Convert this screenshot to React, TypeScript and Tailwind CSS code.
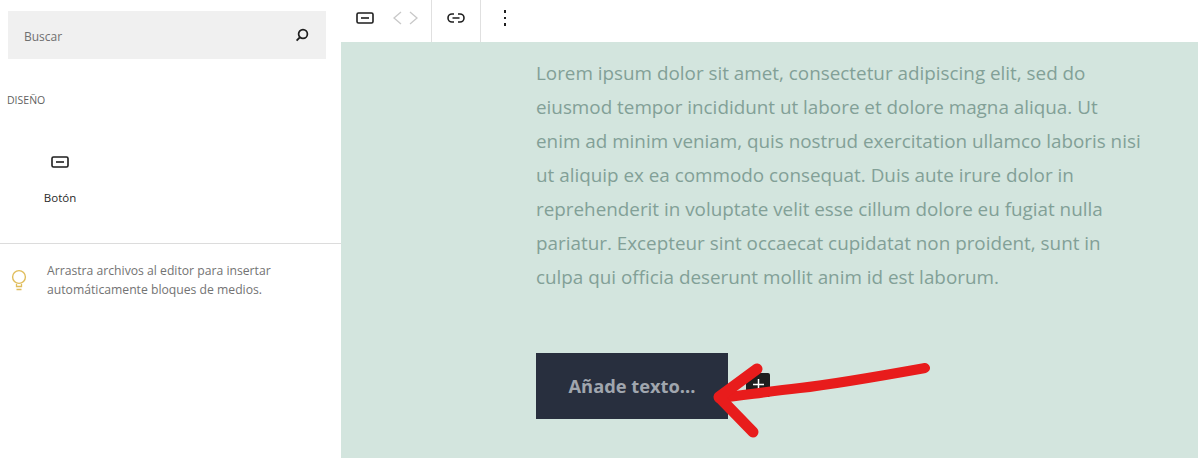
import { Fragment } from "react";

const font = "font-['Open_Sans',sans-serif]";

const lines = [
  "Lorem ipsum dolor sit amet, consectetur adipiscing elit, sed do",
  "eiusmod tempor incididunt ut labore et dolore magna aliqua. Ut",
  "enim ad minim veniam, quis nostrud exercitation ullamco laboris nisi",
  "ut aliquip ex ea commodo consequat. Duis aute irure dolor in",
  "reprehenderit in voluptate velit esse cillum dolore eu fugiat nulla",
  "pariatur. Excepteur sint occaecat cupidatat non proident, sunt in",
  "culpa qui officia deserunt mollit anim id est laborum.",
];

const ButtonIcon = () => (
  <svg width="18" height="12" viewBox="0 0 18 12" fill="none">
    <rect x="1" y="1" width="16" height="10" rx="1.5" stroke="#1e1e1e" strokeWidth="1.6" />
    <path d="M5 6h8" stroke="#1e1e1e" strokeWidth="1.6" />
  </svg>
);

const Sidebar = () => (
  <aside className="w-[341px] h-full shrink-0 bg-white flex flex-col">
    <div className="pl-2 pr-[15px] pt-[11px]">
      <div className="h-[48px] bg-[#f0f0f0] flex items-center justify-between pl-4 pr-4">
        <span className="text-[12px] leading-[16px] mt-[3px] text-[#6f6f6f]">Buscar</span>
        <svg width="16" height="16" viewBox="0 0 16 16" fill="none" className="mb-[1px]">
          <circle cx="9" cy="7" r="4.4" stroke="#1e1e1e" strokeWidth="1.7" />
          <path d="M5.8 10.4 2.6 13.6" stroke="#1e1e1e" strokeWidth="1.9" />
        </svg>
      </div>
    </div>
    <div className="pl-[7px] mt-[33px] text-[10.5px] leading-[16px] text-[#5f5f5f]">DISEÑO</div>
    <div className="w-[104px] ml-[8px] mt-[48px] flex flex-col items-center">
      <ButtonIcon />
      <span className="mt-[22px] text-[11.5px] leading-[16px] text-[#2a2a2a]">Botón</span>
    </div>
    <div className="mt-[37px] border-t border-[#dcdcdc] flex pt-[17px] pl-[11px]">
      <svg width="16" height="28" viewBox="0 0 16 28" fill="none" className="mt-[8px]">
        <circle cx="8" cy="8" r="6.4" stroke="#e0bd5c" strokeWidth="1.4" />
        <path d="M5.5 15v2.5h5V15M5.5 20.5h5" stroke="#e0bd5c" strokeWidth="1.3" />
      </svg>
      <p className="ml-[20px] text-[12.2px] leading-[19px] text-[#737373]">
        Arrastra archivos al editor para insertar
        <br />
        automáticamente bloques de medios.
      </p>
    </div>
  </aside>
);

const Toolbar = () => (
  <div className="h-[42px] bg-white flex items-stretch shrink-0">
    <div className="w-[91px] border-r border-[#e0e0e0] flex items-center pl-[15px] pb-[6px]">
      <ButtonIcon />
      <svg width="25" height="14" viewBox="0 0 25 14" fill="none" className="ml-[19px]">
        <path d="M8 1 1 7l7 6M17 1l7 6-7 6" stroke="#c8c8c8" strokeWidth="1.3" />
      </svg>
    </div>
    <div className="w-[49px] border-r border-[#e0e0e0] flex items-center justify-center pb-[6px]">
      <svg width="20" height="12" viewBox="0 0 20 12" fill="none">
        <path d="M8 2H6a4 4 0 0 0 0 8h2M12 2h2a4 4 0 0 1 0 8h-2M6.5 6h7" stroke="#1e1e1e" strokeWidth="1.6" />
      </svg>
    </div>
    <div className="w-[48px] flex flex-col items-center justify-center gap-[4px] pb-[6px]">
      <span className="w-[2.5px] h-[2.5px] bg-[#1e1e1e]" />
      <span className="w-[2.5px] h-[2.5px] bg-[#1e1e1e]" />
      <span className="w-[2.5px] h-[2.5px] bg-[#1e1e1e]" />
    </div>
  </div>
);

const Arrow = () => (
  <svg width="240" height="90" viewBox="0 0 240 90" fill="none" className="absolute left-[170px] top-0">
    <path d="M219 15C180 22 130 31 94 35S40 42 13 45" stroke="#e81c1c" strokeWidth="10" strokeLinecap="round" />
    <path
      d="M51 16 13 44 47 79"
      stroke="#e81c1c"
      strokeWidth="11"
      strokeLinecap="round"
      strokeLinejoin="round"
    />
  </svg>
);

export default function App() {
  return (
    <div className={`w-[1198px] h-[458px] flex overflow-hidden bg-white ${font}`}>
      <Sidebar />
      <main className="flex-1 flex flex-col">
        <Toolbar />
        <div className="flex-1 bg-[#d3e5de] pl-[195px] pt-[14px]">
          <p className="text-[18.85px] leading-[34px] text-[#82a097] whitespace-nowrap">
            {lines.map((line) => (
              <Fragment key={line}>
                {line}
                <br />
              </Fragment>
            ))}
          </p>
          <div className="relative mt-[59px] flex items-start">
            <div className="w-[192px] h-[66px] bg-[#282f3e] flex items-center justify-center text-[18.3px] font-bold text-[#a0a6ae]">
              Añade texto...
            </div>
            <div className="ml-[18px] mt-[20px] w-[24px] h-[24px] rounded-[2px] bg-[#1e1e1e] flex items-center justify-center">
              <svg width="11" height="11" viewBox="0 0 11 11" fill="none" className="mb-[1px]">
                <path d="M5.5 0v11M0 5.5h11" stroke="#fff" strokeWidth="1.5" />
              </svg>
            </div>
            <Arrow />
          </div>
        </div>
      </main>
    </div>
  );
}
